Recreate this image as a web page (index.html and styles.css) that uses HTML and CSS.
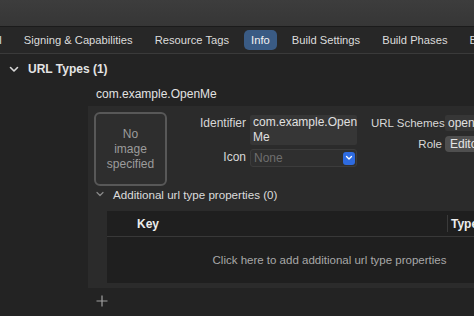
FILE: index.html
```html
<!DOCTYPE html>
<html>
<head>
  <meta charset="UTF-8">
  <title>Info</title>
  <link rel="stylesheet" href="styles.css">
</head>
<body>
  <div class="toolbar"></div>
  <div class="tabs">
    <span class="tab first">General</span>
    <span class="tab">Signing &amp; Capabilities</span>
    <span class="tab">Resource Tags</span>
    <span class="tab active">Info</span>
    <span class="tab">Build Settings</span>
    <span class="tab">Build Phases</span>
    <span class="tab">Build Rules</span>
  </div>

  <div class="content">
    <div class="section-head">
      <svg class="chev" width="10" height="8" viewBox="0 0 10 8"><path d="M1.5 2.5 L5 6 L8.5 2.5" fill="none" stroke="#d8d8d8" stroke-width="1.6" stroke-linecap="round" stroke-linejoin="round"/></svg>
      <span>URL Types (1)</span>
    </div>

    <div class="entry">
      <div class="entry-title">com.example.OpenMe</div>
      <div class="panel">
        <div class="panel-top">
          <div class="well">No<br>image<br>specified</div>

          <div class="form">
            <label>Identifier</label>
            <div class="field multi">com.example.Open Me</div>
            <label>Icon</label>
            <div class="popup">
              <span class="placeholder">None</span>
              <span class="popup-btn">
                <svg width="8" height="6" viewBox="0 0 8 6"><path d="M1.5 1.5 L4 4 L6.5 1.5" fill="none" stroke="#fff" stroke-width="1.3" stroke-linecap="round" stroke-linejoin="round"/></svg>
              </span>
            </div>
          </div>

          <div class="form right">
            <label>URL Schemes</label>
            <div class="field">openme</div>
            <label>Role</label>
            <div class="role">Editor</div>
          </div>
        </div>

        <div class="sub-head">
          <svg class="chev" width="10" height="8" viewBox="0 0 10 8"><path d="M2 2.5 L5 5.5 L8 2.5" fill="none" stroke="#8a8a8a" stroke-width="1.2" stroke-linecap="round" stroke-linejoin="round"/></svg>
          <span>Additional url type properties (0)</span>
        </div>

        <div class="table">
          <div class="thead">
            <div class="th key">Key</div>
            <div class="th type">Type</div>
          </div>
          <div class="tbody">Click here to add additional url type properties</div>
        </div>
      </div>
      <div class="add">
        <svg width="12" height="12" viewBox="0 0 12 12"><path d="M6 0.5 V11.5 M0.5 6 H11.5" stroke="#a0a0a0" stroke-width="1.2"/></svg>
      </div>
    </div>
  </div>
</body>
</html>
```

FILE: styles.css
```css
body {
  margin: 0;
  width: 474px;
  height: 316px;
  overflow: hidden;
  background-color: #232323;
  font-family: "Liberation Sans", Arial, sans-serif;
  font-size: 12px;
  color: #dedede;
}
.toolbar {
  height: 26px;
  background: linear-gradient(#3d3d3d, #363636);
  border-bottom: 1px solid #1b1b1b;
}
.tabs {
  display: flex;
  align-items: center;
  gap: 8px;
  height: 26px;
  margin-left: -45px;
  background-color: #272727;
  border-bottom: 1px solid #3a3a3a;
  white-space: nowrap;
  font-size: 11.2px;
}
.tab {
  padding: 3px 7px;
  border-radius: 5px;
  color: #dcdcdc;
  line-height: 14px;
}
.tab.active {
  background-color: #3a5b84;
  color: #f2f2f2;
}
.content {
  padding-top: 7px;
}
.section-head {
  display: flex;
  align-items: center;
  height: 16px;
  padding-left: 9px;
  font-weight: bold;
  color: #e4e4e4;
}
.section-head .chev {
  margin-right: 9px;
}
.entry {
  margin-left: 88px;
  margin-top: 4px;
}
.entry-title {
  padding: 5px 0 0 8px;
  height: 16px;
  line-height: 16px;
  margin-bottom: 4px;
  color: #e2e2e2;
}
.panel {
  width: 472px;
  height: 182px;
  background-color: #2b2b2b;
}
.panel-top {
  display: flex;
  padding: 6px 0 0 6px;
  height: 74px;
}
.well {
  width: 69px;
  height: 70px;
  border: 2px solid #585858;
  border-radius: 6px;
  background-color: #2e2e2e;
  display: flex;
  align-items: center;
  justify-content: center;
  text-align: center;
  line-height: 15px;
  color: #9c9c9c;
}
.form {
  display: grid;
  grid-template-columns: 71px 107px;
  column-gap: 4px;
  row-gap: 4px;
  align-content: start;
  margin-left: 8px;
  padding-top: 3px;
}
.form label {
  text-align: right;
  line-height: 16px;
  white-space: nowrap;
  color: #d8d8d8;
}
.field {
  background-color: #363636;
  border-radius: 2px;
  padding: 0 3px;
  line-height: 16px;
  color: #e0e0e0;
}
.field.multi {
  height: 30px;
  line-height: 15px;
}
.popup {
  display: flex;
  align-items: center;
  justify-content: space-between;
  height: 16px;
  padding-left: 3px;
  border: 1px solid #3c3c3c;
  border-radius: 3px;
  background-color: #2f2f2f;
}
.placeholder {
  color: #6e6e6e;
}
.popup-btn {
  display: flex;
  align-items: center;
  justify-content: center;
  width: 12px;
  height: 13px;
  margin-right: 1px;
  border-radius: 3px;
  background-color: #2e6be0;
}
.form.right {
  grid-template-columns: 71px 60px;
  column-gap: 3px;
  row-gap: 5px;
  margin-left: 14px;
}
.form.right label {
  font-size: 11.5px;
}
.role {
  width: 40px;
  height: 16px;
  line-height: 16px;
  padding-left: 5px;
  border-radius: 4px;
  background-color: #4f4f4f;
  color: #e6e6e6;
}
.sub-head {
  display: flex;
  align-items: center;
  height: 16px;
  margin-top: 0;
  padding-left: 7px;
  font-size: 11.6px;
  color: #dcdcdc;
}
.sub-head .chev {
  margin-right: 8px;
}
.table {
  width: 445px;
  margin: 9px 0 0 19px;
  background-color: #1f1f1f;
}
.thead {
  display: flex;
  height: 25px;
  border-bottom: 1px solid #383838;
  font-weight: bold;
  color: #ececec;
}
.th {
  display: flex;
  align-items: center;
}
.th.key {
  width: 310px;
  padding-left: 30px;
}
.th.type {
  flex: 1;
  margin: 4px 0;
  padding-left: 3px;
  border-left: 1px solid #3a3a3a;
}
.tbody {
  height: 46px;
  display: flex;
  align-items: center;
  justify-content: center;
  font-size: 11.5px;
  color: #a8a8a8;
}
.add {
  display: flex;
  padding: 7px 0 0 8px;
}
```
